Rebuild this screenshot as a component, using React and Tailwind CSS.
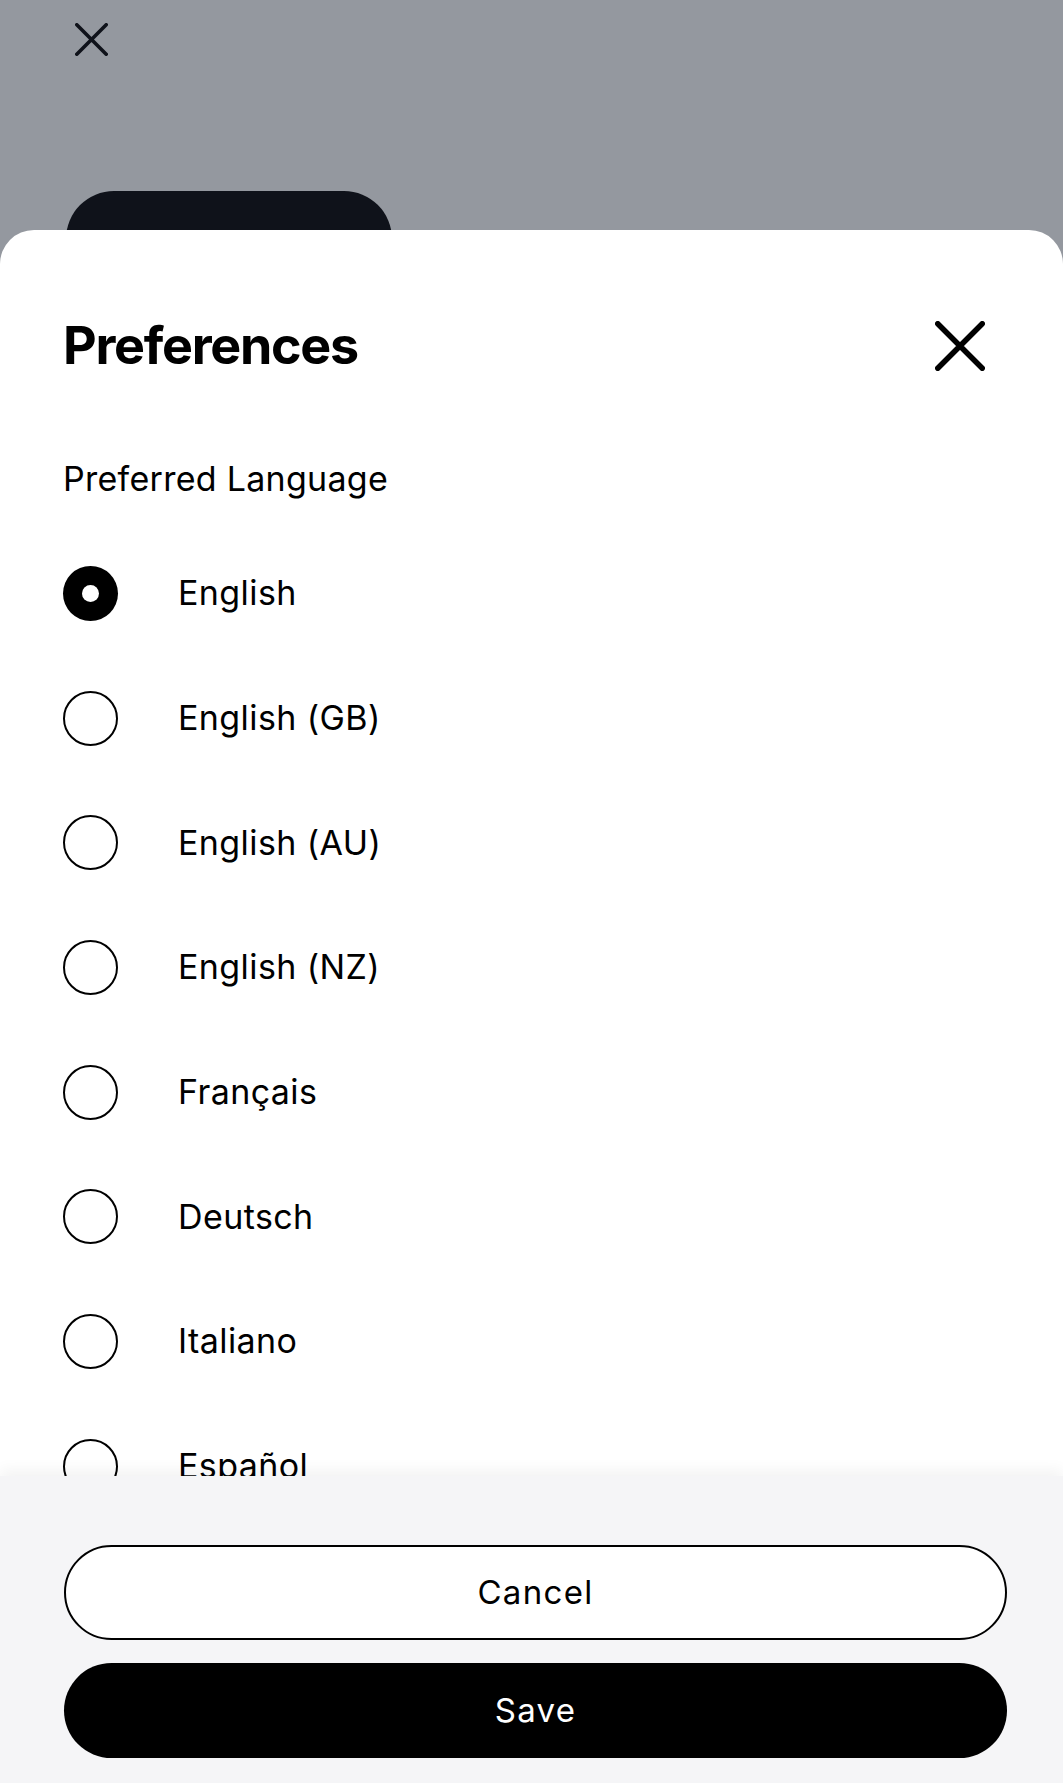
import React from "react";

const languages = [
  "English",
  "English (GB)",
  "English (AU)",
  "English (NZ)",
  "Français",
  "Deutsch",
  "Italiano",
  "Español",
];

function XIcon({ size, stroke, color }) {
  const p = stroke / 2;
  return (
    <svg width={size} height={size} viewBox={`0 0 ${size} ${size}`} fill="none">
      <path
        d={`M${p} ${p} L${size - p} ${size - p} M${size - p} ${p} L${p} ${size - p}`}
        stroke={color}
        strokeWidth={stroke}
        strokeLinecap="round"
      />
    </svg>
  );
}

export default function App() {
  return (
    <div
      className="w-[1063px] h-[1783px] bg-[#94989f] flex flex-col overflow-hidden"
      style={{ fontFamily: "Inter, 'Noto Sans', sans-serif" }}
    >
      {/* Background page (dimmed) */}
      <div className="h-[230px] shrink-0 overflow-hidden relative">
        <div className="pl-[75px] pt-[23px]">
          <XIcon size={33} stroke={3.6} color="#0f121a" />
        </div>
        <div className="ml-[66px] mt-[135px] w-[326px] h-[96px] rounded-full bg-[#0f121a]" />
      </div>

      {/* Sheet */}
      <div className="flex-1 bg-white rounded-t-[34px] flex flex-col overflow-hidden text-black">
        <div className="flex-1 overflow-hidden pl-[63px] pr-[78px] pt-[90px]">
          <div className="flex items-center justify-between h-[52px]">
            <h1 className="text-[52px] leading-none font-bold tracking-[-0.025em]">Preferences</h1>
            <button className="w-[50px] h-[50px] flex items-center justify-center">
              <XIcon size={50} stroke={5.5} color="#000" />
            </button>
          </div>
          <div className="mt-[90px] text-[34px] leading-none tracking-[0.008em]">Preferred Language</div>
          <div className="mt-[35px] flex flex-col">
            {languages.map((lang, i) => (
              <div key={lang} className="h-[124.7px] shrink-0 flex items-center gap-[60px]">
                {i === 0 ? (
                  <div className="w-[55px] h-[55px] rounded-full bg-black flex items-center justify-center">
                    <div className="w-[17px] h-[17px] rounded-full bg-white" />
                  </div>
                ) : (
                  <div className="w-[55px] h-[55px] rounded-full border-2 border-black box-border" />
                )}
                <span className="text-[34px] leading-none tracking-[0.012em]">{lang}</span>
              </div>
            ))}
          </div>
        </div>

        {/* Footer */}
        <div className="shrink-0 bg-[#f5f5f7] pt-[69px] pb-[25px] pl-[64px] pr-[56px] flex flex-col gap-[23px] shadow-[0_-6px_14px_rgba(0,0,0,0.05)] relative">
          <button className="h-[95px] w-full rounded-full bg-white border-2 border-black text-[33px] tracking-[0.04em] text-black">
            Cancel
          </button>
          <button className="h-[95px] w-full rounded-full bg-black text-[33px] tracking-[0.04em] text-white">
            Save
          </button>
        </div>
      </div>
    </div>
  );
}
